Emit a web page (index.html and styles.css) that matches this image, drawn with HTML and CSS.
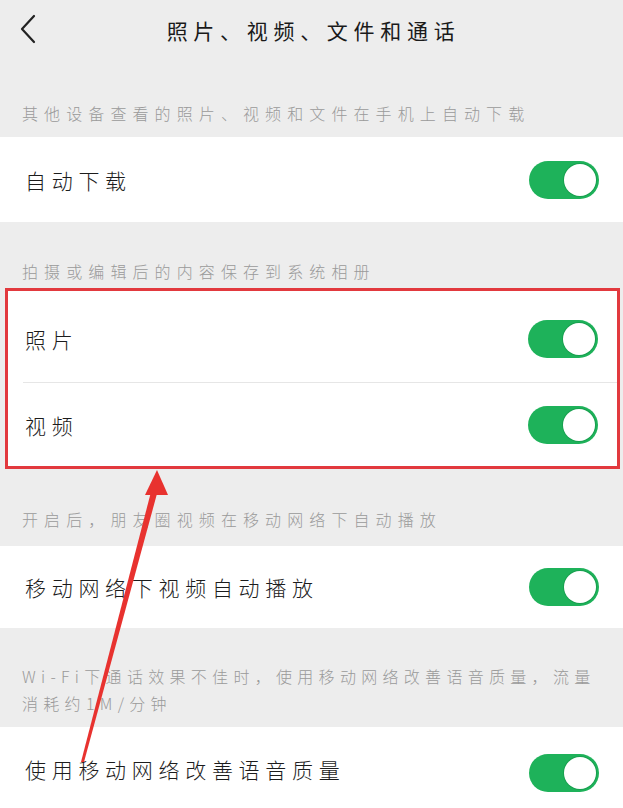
FILE: index.html
```html
<!DOCTYPE html>
<html lang="zh-CN">
<head>
<meta charset="utf-8">
<title>照片、视频、文件和通话</title>
<link rel="stylesheet" href="styles.css">
</head>
<body>
<div class="page">
  <header class="topbar">
    <svg class="back" width="18" height="30" viewBox="0 0 18 30"><path d="M15 2 L3 15 L15 28" fill="none" stroke="#222" stroke-width="2.2" stroke-linecap="round" stroke-linejoin="round"/></svg>
    <h1 class="title">照片、视频、文件和通话</h1>
  </header>

  <p class="label l1">其他设备查看的照片、视频和文件在手机上自动下载</p>
  <div class="row r1"><span class="text">自动下载</span><span class="switch"></span></div>

  <p class="label l2">拍摄或编辑后的内容保存到系统相册</p>
  <div class="group">
    <div class="row ga"><span class="text">照片</span><span class="switch"></span></div>
    <div class="row gb"><span class="text">视频</span><span class="switch"></span></div>
  </div>

  <p class="label l3">开启后，朋友圈视频在移动网络下自动播放</p>
  <div class="row r3"><span class="text">移动网络下视频自动播放</span><span class="switch"></span></div>

  <p class="label l4">Wi-Fi下通话效果不佳时，使用移动网络改善语音质量，流量消耗约1M/分钟</p>
  <div class="row r4"><span class="text">使用移动网络改善语音质量</span><span class="switch"></span></div>

  <svg class="arrow" width="623" height="808" viewBox="0 0 623 808">
    <polygon points="81,762 84,762 158,490 152,488" fill="#e8322f"/>
    <polygon points="157,470 145,495 168,495" fill="#e8322f"/>
  </svg>
</div>
</body>
</html>
```

FILE: styles.css
```css
html, body {
  margin: 0;
  padding: 0;
}
body {
  background: #ededed;
  font-family: "Noto Sans CJK SC", "Noto Sans", sans-serif;
  font-weight: 300;
  color: #1f1f1f;
}
.page {
  position: relative;
  width: 623px;
  height: 808px;
  overflow: hidden;
  background: #ededed;
}
.topbar {
  height: 60px;
  display: flex;
  align-items: center;
  justify-content: center;
  position: relative;
}
.back {
  position: absolute;
  left: 19px;
  top: 14px;
}
.title {
  margin: 0;
  font-size: 21px;
  font-weight: 400;
  letter-spacing: 5.7px;
  color: #1a1a1a;
  padding-left: 4px;
}
.label {
  margin: 0;
  padding: 0 22px;
  font-size: 16px;
  line-height: 26px;
  letter-spacing: 6.1px;
  color: #9a9a9a;
}
.l1 { padding-top: 40px; padding-bottom: 11px; }
.l2 { padding-top: 36px; padding-bottom: 4px; }
.l3 { padding-top: 37px; padding-bottom: 14px; }
.l4 { padding-top: 35px; padding-bottom: 10px; line-height: 27px; letter-spacing: 5.3px; }
.row {
  background: #fff;
  display: flex;
  align-items: center;
  justify-content: space-between;
  padding: 0 24px 0 25px;
}
.text {
  font-size: 21px;
  letter-spacing: 5.7px;
  color: #1c1c1c;
}
.r1 { height: 85px; }
.r3 { height: 82px; }
.r4 { height: 90px; align-items: flex-start; padding-top: 27px; box-sizing: border-box; }
.group {
  margin: 0 3px 0 5px;
  border: 3px solid #e2393e;
  background: #fff;
}
.group .row { padding: 0 19px 0 17px; }
.ga { height: 91px; padding-top: 4px !important; box-sizing: border-box; }
.gb {
  height: 84px;
  box-sizing: border-box;
  border-top: 1px solid #e6e6e6;
  margin-left: 15px;
  padding-left: 2px !important;
}
.switch {
  position: relative;
  width: 70px;
  height: 38px;
  border-radius: 19px;
  background: #1eb25a;
  flex: none;
}
.switch::after {
  content: "";
  position: absolute;
  right: 3px;
  top: 3px;
  width: 32px;
  height: 32px;
  border-radius: 50%;
  background: #fff;
  box-shadow: 0 0 0 1px #18a04f;
}
.arrow {
  position: absolute;
  left: 0;
  top: 0;
  pointer-events: none;
}
```
